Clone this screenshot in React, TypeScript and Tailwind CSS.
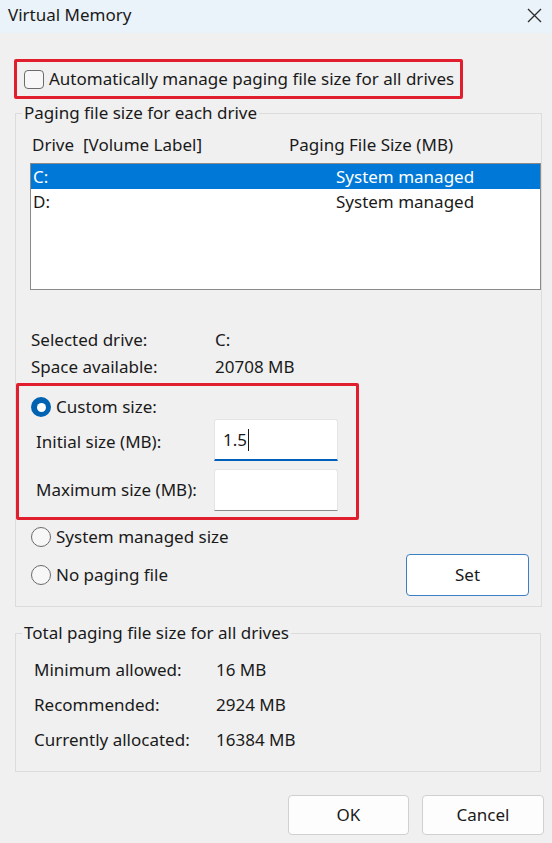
import React from "react";

const font = { fontFamily: '"Noto Sans", "Open Sans", sans-serif' };

function Radio({ checked }: { checked?: boolean }) {
  if (checked) {
    return (
      <span className="flex h-[20px] w-[20px] shrink-0 items-center justify-center rounded-full bg-[#0063b1]">
        <span className="h-[9px] w-[9px] rounded-full bg-white" />
      </span>
    );
  }
  return (
    <span className="h-[20px] w-[20px] shrink-0 rounded-full border border-[#6b6b6b] bg-[#f7f7f7]" />
  );
}

function InfoRow({ label, value, h, pl, lw }: { label: string; value: string; h: string; pl: string; lw: string }) {
  return (
    <div className={`flex items-center ${h} ${pl}`}>
      <span className={`${lw} shrink-0`}>{label}</span>
      <span>{value}</span>
    </div>
  );
}

export default function App() {
  return (
    <div
      className="flex h-[843px] w-[552px] flex-col overflow-hidden bg-[#f0f0f0] text-[17px] leading-[24px] text-[#1a1a1a]"
      style={font}
    >
      {/* title bar */}
      <div className="flex h-[33px] shrink-0 items-start justify-between bg-[#eaf3f9] pl-[8px] pr-[10px]">
        <span className="mt-[3px] text-[17px] leading-[24px]">Virtual Memory</span>
        <svg className="mt-[8px]" width="15" height="15" viewBox="0 0 15 15">
          <path d="M1 1 L14 14 M14 1 L1 14" stroke="#2b2b2b" strokeWidth="1.3" fill="none" />
        </svg>
      </div>

      {/* auto manage */}
      <div className="ml-[14px] mt-[26px] flex h-[40px] w-[449px] shrink-0 items-center gap-[5px] rounded-[2px] border-[3px] border-[#e01e2e] pl-[7px]">
        <span className="h-[19px] w-[20px] rounded-[4px] border border-[#6b6b6b] bg-[#f7f7f7]" />
        <span>Automatically manage paging file size for all drives</span>
      </div>

      {/* per drive group */}
      <fieldset className="ml-[15px] mt-[2px] w-[525px] shrink-0 border border-[#dcdcdc] pb-[10px]">
        <legend className="ml-[6px] px-[2px]">Paging file size for each drive</legend>

        <div className="mt-[8px] flex pl-[16px]">
          <span className="w-[51px]">Drive</span>
          <span className="w-[206px]">[Volume Label]</span>
          <span>Paging File Size (MB)</span>
        </div>

        <div className="ml-[14px] mt-[6px] h-[127px] w-[511px] border border-[#8a8a8a] bg-white">
          <div className="flex h-[25px] items-center bg-[#0078d7] pl-[2px] text-white">
            <span className="w-[303px]">C:</span>
            <span>System managed</span>
          </div>
          <div className="flex h-[25px] items-center pl-[2px]">
            <span className="w-[303px]">D:</span>
            <span>System managed</span>
          </div>
        </div>

        <div className="mt-[38px]">
          <InfoRow label="Selected drive:" value="C:" h="h-[24px]" pl="pl-[15px]" lw="w-[184px]" />
          <div className="mt-[3px]">
            <InfoRow label="Space available:" value="20708 MB" h="h-[24px]" pl="pl-[15px]" lw="w-[184px]" />
          </div>
        </div>

        {/* custom size */}
        <div className="mt-[4px] h-[137px] w-[343px] rounded-[2px] border-[3px] border-[#e01e2e] pl-[12px] pt-[9px]">
          <div className="flex h-[24px] items-center gap-[5px]">
            <Radio checked />
            <span>Custom size:</span>
          </div>
          <div className="flex items-center pl-[5px]">
            <span className="mt-[3px] w-[178px] shrink-0">Initial size (MB):</span>
            <div className="flex h-[42px] w-[124px] items-center rounded-t-[3px] border border-b-2 border-[#e5e5e5] border-b-[#005fb8] bg-white pl-[8px]">
              1.5<span className="ml-[1px] h-[22px] w-[1px] bg-[#1a1a1a]" />
            </div>
          </div>
          <div className="mt-[8px] flex items-center pl-[5px]">
            <span className="w-[178px] shrink-0">Maximum size (MB):</span>
            <div className="h-[42px] w-[124px] rounded-t-[3px] border border-[#e5e5e5] border-b-[#8a8a8a] bg-white" />
          </div>
        </div>

        <div className="mt-[5px] flex h-[24px] items-center gap-[5px] pl-[15px]">
          <Radio />
          <span>System managed size</span>
        </div>
        <div className="mt-[5px] flex h-[42px] items-center justify-between pl-[15px] pr-[12px]">
          <div className="flex items-center gap-[5px]">
            <Radio />
            <span>No paging file</span>
          </div>
          <button className="h-[42px] w-[123px] rounded-[4px] border border-[#3b7fc4] bg-white">Set</button>
        </div>
      </fieldset>

      {/* totals */}
      <fieldset className="ml-[15px] mt-[14px] w-[526px] shrink-0 border border-[#dcdcdc] pb-[14px]">
        <legend className="ml-[6px] px-[2px]">Total paging file size for all drives</legend>
        <div className="mt-[7px]">
          <InfoRow label="Minimum allowed:" value="16 MB" h="h-[35px]" pl="pl-[18px]" lw="w-[182px]" />
          <InfoRow label="Recommended:" value="2924 MB" h="h-[35px]" pl="pl-[18px]" lw="w-[182px]" />
          <InfoRow label="Currently allocated:" value="16384 MB" h="h-[35px]" pl="pl-[18px]" lw="w-[182px]" />
        </div>
      </fieldset>

      <div className="mt-[23px] flex justify-end gap-[13px] pr-[8px]">
        <button className="h-[40px] w-[121px] rounded-[4px] border border-[#d0d0d0] bg-[#fdfdfd]">OK</button>
        <button className="h-[40px] w-[122px] rounded-[4px] border border-[#d0d0d0] bg-[#fdfdfd]">Cancel</button>
      </div>
    </div>
  );
}
